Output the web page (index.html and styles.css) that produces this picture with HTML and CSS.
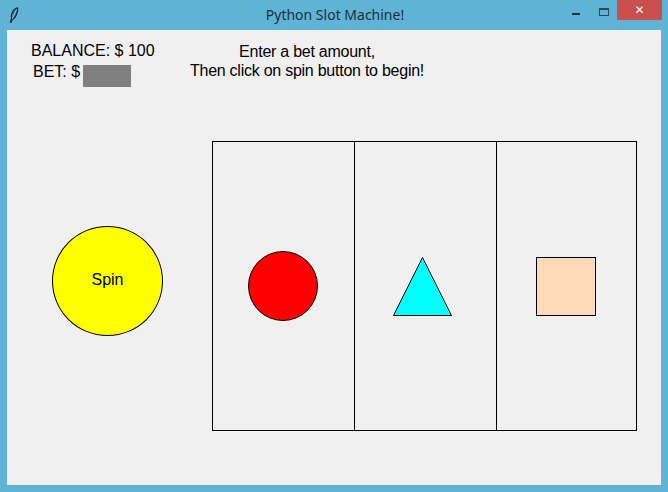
FILE: index.html
```html
<!DOCTYPE html>
<html>
<head>
<meta charset="utf-8">
<link rel="stylesheet" href="styles.css">
</head>
<body>
<div class="window">
  <div class="titlebar">
    <svg class="feather" width="10" height="16" viewBox="0 0 10 16">
      <path d="M8.5 0.8 C6 1.5 3.5 4 2.6 7.5 C2.2 9.3 2.4 10.8 2.6 11.8 L1.3 15.2 L2.1 15.4 L3.2 12.2 C5 11.8 6.8 9.5 7.8 6.5 C8.6 4.2 9 2.3 8.5 0.8 Z" fill="#3d6e96" stroke="#14202c" stroke-width="1.1"/>
      <path d="M7.6 2.5 L3.3 11.8" stroke="#d8ecf7" stroke-width="0.7"/>
    </svg>
    <div class="title">Python Slot Machine!</div>
    <div class="controls">
      <div class="btn-min"><span></span></div>
      <div class="btn-max"><span></span></div>
      <div class="btn-close">&#x2715;</div>
    </div>
  </div>
  <div class="client">
    <div class="header">
      <div class="left">
        <div class="balance">BALANCE: $ 100</div>
        <div class="bet-row">
          <span class="bet-label">BET: $</span>
          <span class="bet-entry"></span>
        </div>
      </div>
      <div class="center">Enter a bet amount,<br>Then click on spin button to begin!</div>
    </div>
    <div class="main">
      <div class="spin">Spin</div>
      <div class="reels">
        <div class="cell"><div class="red-circle"></div></div>
        <div class="cell"><svg class="tri" width="59" height="59" viewBox="0 0 59 59"><polygon points="0.5,58.5 58.5,58.5 29.5,0.5" fill="#00ffff" stroke="#000" stroke-width="1"/></svg></div>
        <div class="cell last"><div class="square"></div></div>
      </div>
    </div>
  </div>
</div>
</body>
</html>
```

FILE: styles.css
```css
html, body {
  margin: 0;
  padding: 0;
}
body {
  width: 668px;
  height: 492px;
  overflow: hidden;
  font-family: "Liberation Sans", Arial, sans-serif;
}
.window {
  width: 668px;
  height: 492px;
  background: #5fb4d6;
  box-sizing: border-box;
  padding: 0 7px 7px 7px;
  display: flex;
  flex-direction: column;
}
.titlebar {
  height: 30px;
  position: relative;
  display: flex;
  align-items: center;
  margin: 0 -7px;
}
.feather {
  position: absolute;
  left: 9px;
  top: 7px;
}
.title {
  flex: 1;
  text-align: center;
  font-family: "Noto Sans", "Open Sans", sans-serif;
  font-size: 14px;
  color: #1e2d3b;
  padding-left: 2px;
  margin-top: -2px;
}
.controls {
  position: absolute;
  right: 6px;
  top: 0;
  display: flex;
  height: 20px;
}
.btn-min {
  width: 26px;
  height: 20px;
  position: relative;
}
.btn-min span {
  position: absolute;
  left: 7px;
  top: 13px;
  width: 8px;
  height: 2px;
  background: #1f3040;
}
.btn-max {
  width: 26px;
  height: 20px;
  position: relative;
}
.btn-max span {
  position: absolute;
  left: 8px;
  top: 8px;
  width: 8px;
  height: 5px;
  border: 1px solid #2a4a60;
  border-top-width: 2px;
}
.btn-close {
  width: 45px;
  height: 20px;
  background: #c9504f;
  color: #ffffff;
  font-size: 12px;
  font-weight: bold;
  display: flex;
  align-items: center;
  justify-content: center;
  font-family: "DejaVu Sans", sans-serif;
}
.client {
  flex: 1;
  background: #f0f0f0;
  padding-top: 11px;
  box-sizing: border-box;
}
.header {
  height: 100px;
  display: flex;
  padding-left: 24px;
  font-size: 16px;
  color: #000;
}
.left {
  width: 146px;
}
.balance {
  line-height: 19px;
}
.bet-row {
  display: flex;
  align-items: flex-start;
  margin-top: 2px;
  padding-left: 2px;
}
.bet-label {
  line-height: 19px;
}
.bet-entry {
  width: 48px;
  height: 22px;
  background: #808080;
  margin-left: 3px;
  margin-top: 3px;
}
.center {
  width: 260px;
  text-align: center;
  line-height: 19px;
  margin-top: 1px;
  letter-spacing: -0.25px;
}
.main {
  display: flex;
  align-items: flex-start;
}
.spin {
  width: 111px;
  height: 110px;
  margin-left: 45px;
  margin-top: 85px;
  border-radius: 50%;
  background: #ffff00;
  border: 1px solid #000;
  box-sizing: border-box;
  display: flex;
  align-items: center;
  justify-content: center;
  font-size: 16px;
  padding-bottom: 2px;
}
.reels {
  margin-left: 49px;
  width: 425px;
  height: 290px;
  box-sizing: border-box;
  border: 1px solid #000;
  display: grid;
  grid-template-columns: 142px 142px 139px;
}
.cell {
  border-right: 1px solid #000;
  display: flex;
  align-items: center;
  justify-content: center;
}
.cell.last {
  border-right: none;
}
.red-circle {
  width: 70px;
  height: 70px;
  border-radius: 50%;
  background: #ff0000;
  border: 1px solid #000;
  box-sizing: border-box;
  margin-right: 2px;
}
.tri {
  display: block;
  margin-right: 6px;
}
.square {
  width: 60px;
  height: 59px;
  background: #ffdab9;
  border: 1px solid #000;
  box-sizing: border-box;
  margin-right: 2px;
}
```
